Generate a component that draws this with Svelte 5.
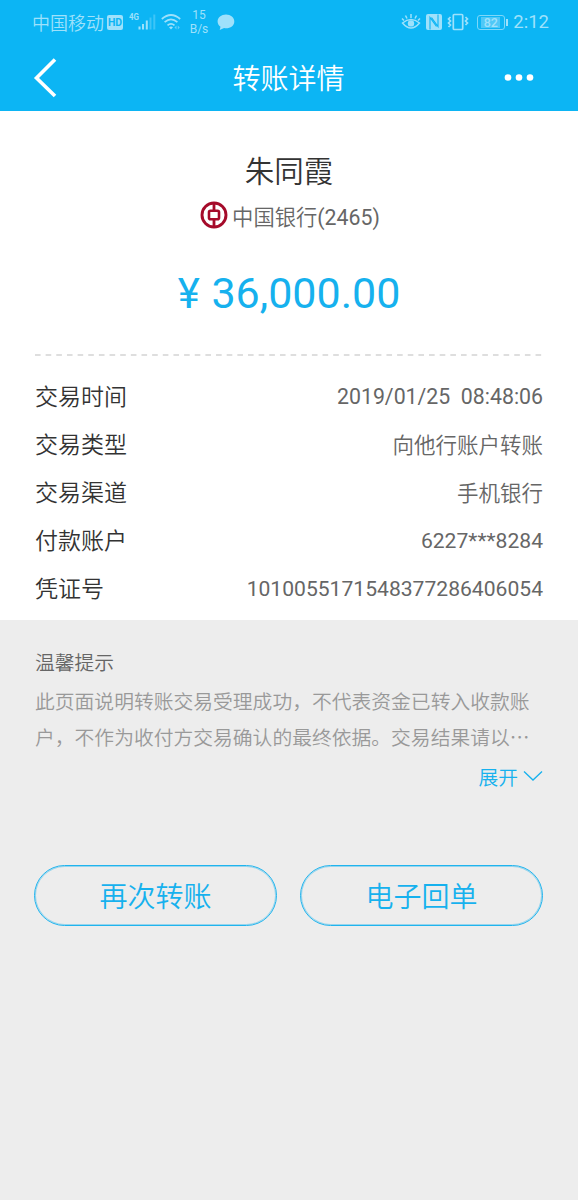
<script>
    const rows = [
        ['交易时间', '2019/01/25  08:48:06', 'date'],
        ['交易类型', '向他行账户转账', 'han'],
        ['交易渠道', '手机银行', 'han'],
        ['付款账户', '6227***8284', ''],
        ['凭证号', '1010055171548377286406054', ''],
    ]
    const tip = '此页面说明转账交易受理成功，不代表资金已转入收款账户，不作为收付方交易确认的最终依据。交易结果请以⋯'
    const actions = ['再次转账', '电子回单']
</script>

<div class="page">
    <header>
        <div class="status">
            <span class="carrier">中国移动</span>
            <span class="hd">HD</span>
            <svg class="signal" width="28" height="20" viewBox="0 0 28 20">
                <text x="0" y="8" font-size="9" font-weight="700" textLength="10" lengthAdjust="spacingAndGlyphs">4G</text>
                <path d="M9.500 14.500h2v3h-2zM13 12h2v5.500h-2zM16.800 8.500h2v9h-2z" />
                <path d="M20.500 5.500h2v12h-2zM24.300 2.500h2v15h-2z" opacity=".35" />
            </svg>
            <svg class="wifi" width="20" height="18" viewBox="0 0 20 18">
                <g fill="none" stroke="currentColor" stroke-width="1.700">
                    <path d="M.800 6Q10-2 19.200 6" />
                    <path d="M3.600 9.200Q10 3.600 16.400 9.200" />
                    <path d="M6.500 12.300Q10 9.300 13.500 12.300" />
                </g>
                <path d="M8 14.200Q10 12.600 12 14.200L10 16.600z" />
                <path d="M13.500 14.500l2-2v4zM18.800 14.500l-2-2v4z" opacity=".6" />
            </svg>
            <span class="speed"><span>15</span><span>B/s</span></span>
            <svg class="chat" width="18" height="17" viewBox="0 0 18 17">
                <path d="M9 .500c4.700 0 8.300 3 8.300 6.900s-3.600 6.900-8.300 6.900c-.700 0-1.300 0-1.900-.200L2.700 16l.8-3.300C1.700 11.400.600 9.600.600 7.400.600 3.500 4.300.500 9 .500z" />
            </svg>
            <span class="gap"></span>
            <svg class="eye" width="20" height="18" viewBox="0 0 20 18" fill="none" stroke="currentColor" stroke-width="1.500">
                <path d="M1.500 10Q10 3 18.500 10Q10 20 1.500 10zM10 5V1M6 5.500L4.500 2.500M14 5.500l1.500-3M3 7.500L1 5.500M17 7.500l2-2" />
                <circle cx="10" cy="10.400" r="3.200" fill="currentColor" stroke="none" />
            </svg>
            <svg class="nfc" width="18" height="18" viewBox="0 0 18 18">
                <rect x="1" y="1" width="16" height="16" rx="2" />
                <path d="M5 16.500V4.500L11.500 13.500M13 1.500V13.500L6.500 4.500" fill="none" stroke="#0cb5f4" stroke-width="1.100" />
            </svg>
            <svg class="vibrate" width="22" height="18" viewBox="0 0 22 18" fill="none" stroke="currentColor" stroke-width="1.700">
                <rect x="6.300" y="1.500" width="9.400" height="15" rx="1" />
                <path d="M3.500 4L1.500 6l2 2-2 2 2 2-2 2M18.500 4l2 2-2 2 2 2-2 2" />
            </svg>
            <span class="battery"><span>82</span></span>
            <span class="clock">2:12</span>
        </div>
        <nav>
            <svg class="back" width="24" height="40" viewBox="0 0 24 40">
                <path d="M22 1.500L3.500 20L22 38" fill="none" stroke="#fff" stroke-width="3.600" />
            </svg>
            <h1>转账详情</h1>
            <svg class="more" width="32" height="8" viewBox="0 0 32 8" fill="#fff">
                <circle cx="4" cy="3.500" r="3.300" />
                <circle cx="15" cy="3.500" r="3.300" />
                <circle cx="26" cy="3.500" r="3.300" />
            </svg>
        </nav>
    </header>

    <main>
        <div class="name">朱同霞</div>
        <div class="bank">
            <svg width="28" height="28" viewBox="0 0 28 28" fill="none" stroke="#a50b2a">
                <circle cx="14" cy="14" r="12" stroke-width="2.900" />
                <rect x="9" y="9.700" width="10" height="8.600" rx="1.500" stroke-width="2.600" />
                <path d="M14 2v7.500M14 18.500V26" stroke-width="2.800" />
            </svg>
            <div>中国银行<span class="num">(2465)</span></div>
        </div>
        <div class="amount num"><span>¥</span> 36,000.00</div>
        <svg class="dashes" width="508" height="2" viewBox="0 0 508 2">
            <path d="M0 1H508" stroke="#dedede" stroke-width="2" stroke-dasharray="5.600 5.050" />
        </svg>
        <dl>
            {#each rows as [label, value, kind]}
                <div class="row">
                    <dt>{label}</dt>
                    <dd class={kind}>{value}</dd>
                </div>
            {/each}
        </dl>
    </main>

    <section>
        <h2>温馨提示</h2>
        <p>{tip}</p>
        <div class="expand">
            <span>展开</span>
            <svg width="20" height="12" viewBox="0 0 20 12">
                <path d="M1 1.500L10 10L19 1.500" fill="none" stroke="#16b1ee" stroke-width="1.300" />
            </svg>
        </div>
        <div class="actions">
            {#each actions as action}
                <button>{action}</button>
            {/each}
        </div>
    </section>
</div>

<style>
    :global(body) {
        background: #ededed;
    }

    .page {
        width: 578px;
        height: 1200px;
        overflow: hidden;
        background: #ededed;
        font-family: Roboto, 'Noto Sans CJK SC', sans-serif;
        font-weight: 350;
    }

    svg {
        display: block;
        flex-shrink: 0;
    }

    .num {
        font-weight: 400;
    }

    header {
        height: 111px;
        background: #0cb5f4;
    }

    .status {
        display: flex;
        align-items: center;
        height: 44px;
        padding: 0 29px 0 32px;
        box-sizing: border-box;
        color: #9ee1fb;
        fill: currentColor;
        font-size: 18px;
        line-height: 24px;
    }

    .carrier {
        width: 75px;
        padding-top: 3px;
    }

    .hd {
        width: 16px;
        height: 15px;
        border-radius: 2px;
        background: #9ee1fb;
        color: #0cb5f4;
        font-size: 10.5px;
        font-weight: 700;
        line-height: 15px;
        text-align: center;
    }

    .signal {
        margin: 0 4px 0 6px;
    }

    .wifi {
        margin-right: 8px;
    }

    .speed {
        display: flex;
        flex-direction: column;
        width: 20px;
        font-size: 12px;
        font-weight: 400;
        line-height: 14px;
        text-align: center;
    }

    .chat {
        margin-left: 8px;
    }

    .gap {
        flex: 1;
    }

    .eye {
        margin-right: 4px;
    }

    .vibrate {
        margin-left: 4px;
    }

    .battery {
        position: relative;
        width: 28px;
        height: 15px;
        margin: 0 8px 0 8px;
        padding: 1px 4px 1px 3px;
        box-sizing: border-box;
        border: 1px solid #7dd7f9;
        border-radius: 3px;
        font-size: 12.5px;
        font-weight: 500;
        line-height: 11px;
        text-align: center;
    }

    .battery span {
        display: block;
        background: #4fc8f7;
    }

    .battery::after {
        content: '';
        position: absolute;
        right: -4px;
        top: 3px;
        width: 2px;
        height: 7px;
        background: #9ee1fb;
    }

    .clock {
        font-size: 18.5px;
        font-weight: 400;
    }

    nav {
        display: flex;
        align-items: center;
        justify-content: space-between;
        height: 67px;
        padding: 0 42px 0 33px;
    }

    h1 {
        margin: 0 0 0 16px;
        padding-top: 4px;
        color: #fff;
        font-size: 28px;
        font-weight: 350;
        line-height: 40px;
    }

    main {
        height: 509px;
        padding: 41px 35px 0;
        box-sizing: border-box;
        background: #fff;
    }

    .name {
        color: #333;
        font-size: 29.5px;
        line-height: 40px;
        text-align: center;
    }

    .bank {
        display: flex;
        align-items: center;
        justify-content: center;
        height: 30px;
        margin-top: 8px;
        gap: 4px;
        padding-left: 2px;
        color: #666;
        font-size: 21.3px;
    }

    .amount {
        height: 64px;
        margin-top: 31px;
        color: #16b1ee;
        font-size: 43px;
        line-height: 64px;
        text-align: center;
    }

    .amount span {
        margin-right: 1px;
        font-size: 42px;
    }

    .dashes {
        margin-top: 29px;
    }

    dl {
        margin: 16px 0 0;
    }

    .row {
        display: flex;
        align-items: center;
        justify-content: space-between;
        height: 48px;
        line-height: 32px;
    }

    dt {
        margin-top: 4px;
        color: #333;
        font-size: 23px;
    }

    dd {
        margin: 1px 0 0;
        color: #666;
        font-size: 21.1px;
        font-weight: 400;
        white-space: pre;
    }

    .date {
        font-size: 21.3px;
    }

    .han {
        margin-top: 4px;
        font-size: 21.5px;
        font-weight: 350;
    }

    section {
        padding: 30px 35px 0;
    }

    h2 {
        margin: 0;
        color: #666;
        font-size: 19.8px;
        font-weight: 350;
        line-height: 28px;
    }

    p {
        width: 500px;
        margin: 7px 0 0;
        color: #999;
        font-size: 19.8px;
        line-height: 36px;
    }

    .expand {
        display: flex;
        align-items: center;
        justify-content: flex-end;
        height: 30px;
        margin-top: 4px;
        gap: 5px;
        color: #16b1ee;
        font-size: 19.8px;
    }

    .actions {
        display: flex;
        justify-content: space-between;
        margin: 74px 0 0 -1px;
    }

    button {
        width: 243px;
        height: 61px;
        padding: 0 0 2px;
        border: 1px solid #20b4ee;
        border-radius: 31px;
        box-shadow: inset 0 0 0 1px rgba(22, 177, 238, .4);
        background: transparent;
        color: #16b1ee;
        font: inherit;
        font-size: 28px;
    }
</style>
